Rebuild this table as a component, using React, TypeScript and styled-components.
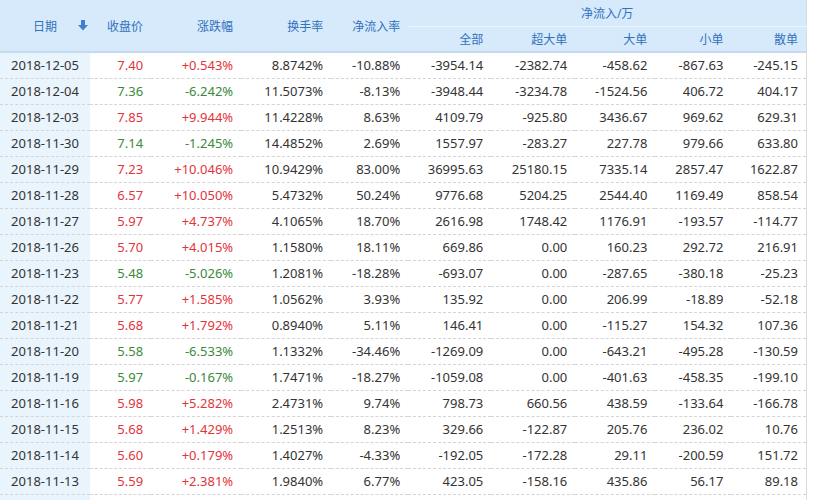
import React from "react";
import styled, { createGlobalStyle } from "styled-components";

const Global = createGlobalStyle`
  html, body { margin: 0; padding: 0; background: #ffffff; }
  body { font-family: "Noto Sans", "Noto Sans CJK SC", sans-serif; }
`;

type Row = [string, string, string, string, string, string, string, string, string, string];

const rows: Row[] = [
  ["2018-12-05", "7.40", "+0.543%", "8.8742%", "-10.88%", "-3954.14", "-2382.74", "-458.62", "-867.63", "-245.15"],
  ["2018-12-04", "7.36", "-6.242%", "11.5073%", "-8.13%", "-3948.44", "-3234.78", "-1524.56", "406.72", "404.17"],
  ["2018-12-03", "7.85", "+9.944%", "11.4228%", "8.63%", "4109.79", "-925.80", "3436.67", "969.62", "629.31"],
  ["2018-11-30", "7.14", "-1.245%", "14.4852%", "2.69%", "1557.97", "-283.27", "227.78", "979.66", "633.80"],
  ["2018-11-29", "7.23", "+10.046%", "10.9429%", "83.00%", "36995.63", "25180.15", "7335.14", "2857.47", "1622.87"],
  ["2018-11-28", "6.57", "+10.050%", "5.4732%", "50.24%", "9776.68", "5204.25", "2544.40", "1169.49", "858.54"],
  ["2018-11-27", "5.97", "+4.737%", "4.1065%", "18.70%", "2616.98", "1748.42", "1176.91", "-193.57", "-114.77"],
  ["2018-11-26", "5.70", "+4.015%", "1.1580%", "18.11%", "669.86", "0.00", "160.23", "292.72", "216.91"],
  ["2018-11-23", "5.48", "-5.026%", "1.2081%", "-18.28%", "-693.07", "0.00", "-287.65", "-380.18", "-25.23"],
  ["2018-11-22", "5.77", "+1.585%", "1.0562%", "3.93%", "135.92", "0.00", "206.99", "-18.89", "-52.18"],
  ["2018-11-21", "5.68", "+1.792%", "0.8940%", "5.11%", "146.41", "0.00", "-115.27", "154.32", "107.36"],
  ["2018-11-20", "5.58", "-6.533%", "1.1332%", "-34.46%", "-1269.09", "0.00", "-643.21", "-495.28", "-130.59"],
  ["2018-11-19", "5.97", "-0.167%", "1.7471%", "-18.27%", "-1059.08", "0.00", "-401.63", "-458.35", "-199.10"],
  ["2018-11-16", "5.98", "+5.282%", "2.4731%", "9.74%", "798.73", "660.56", "438.59", "-133.64", "-166.78"],
  ["2018-11-15", "5.68", "+1.429%", "1.2513%", "8.23%", "329.66", "-122.87", "205.76", "236.02", "10.76"],
  ["2018-11-14", "5.60", "+0.179%", "1.4027%", "-4.33%", "-192.05", "-172.28", "29.11", "-200.59", "151.72"],
  ["2018-11-13", "5.59", "+2.381%", "1.9840%", "6.77%", "423.05", "-158.16", "435.86", "56.17", "89.18"],
];

const colWidths = [90, 61, 90, 90, 77, 83, 84, 80, 76, 75];

const Table = styled.table`
  width: 807px;
  table-layout: fixed;
  border-collapse: collapse;
  border-right: 1px solid #dcdcdc;
  font-size: 13px;
  color: #333333;
`;

const Head = styled.thead`
  background: #d6eafb;
  border-bottom: 2px solid #c4daef;
`;

const HeadRow = styled.tr`
  height: 26px;
`;

const Th = styled.th<{ $align?: "center" | "right" }>`
  font-weight: normal;
  font-size: 12px;
  color: #3271bb;
  text-align: ${(p) => p.$align ?? "right"};
  padding: 0 8px 0 0;
  white-space: nowrap;
  vertical-align: middle;
`;

const DateTh = styled(Th)`
  position: relative;
  padding: 0;
`;

const GroupTh = styled(Th)`
  text-align: center;
  padding: 0;
  border-bottom: 1px solid #eaf4fd;
`;

const SortArrow = styled.svg`
  position: absolute;
  right: 2px;
  top: 20px;
  width: 10px;
  height: 11px;
`;

const Tr = styled.tr`
  height: 26px;
  border-bottom: 1px dashed #d4d4d4;
`;

const Td = styled.td<{ $tone?: "up" | "down" | "plain" }>`
  text-align: right;
  padding: 0 8px 0 0;
  white-space: nowrap;
  color: ${(p) => (p.$tone === "up" ? "#e2343b" : p.$tone === "down" ? "#3b8a3b" : "#333333")};
`;

const DateTd = styled.td`
  text-align: center;
  background: #eaf4fd;
  padding: 0;
  white-space: nowrap;
`;

const FillerRow = styled.tr`
  height: 20px;
`;

function tone(change: string): "up" | "down" {
  return change.startsWith("-") ? "down" : "up";
}

export default function App() {
  return (
    <>
      <Global />
      <Table>
        <colgroup>
          {colWidths.map((w, i) => (
            <col key={i} style={{ width: w }} />
          ))}
        </colgroup>
        <Head>
          <HeadRow>
            <DateTh rowSpan={2} $align="center">
              日期
              <SortArrow viewBox="0 0 10 11">
                <rect x="3" y="0" width="4" height="5" fill="#3f7fd0" />
                <polygon points="0,5 10,5 5,10.5" fill="#3f7fd0" />
              </SortArrow>
            </DateTh>
            <Th rowSpan={2}>收盘价</Th>
            <Th rowSpan={2}>涨跌幅</Th>
            <Th rowSpan={2}>换手率</Th>
            <Th rowSpan={2}>净流入率</Th>
            <GroupTh colSpan={5}>净流入/万</GroupTh>
          </HeadRow>
          <HeadRow>
            <Th>全部</Th>
            <Th>超大单</Th>
            <Th>大单</Th>
            <Th>小单</Th>
            <Th>散单</Th>
          </HeadRow>
        </Head>
        <tbody>
          {rows.map((r) => {
            const t = tone(r[2]);
            return (
              <Tr key={r[0]}>
                <DateTd>{r[0]}</DateTd>
                <Td $tone={t}>{r[1]}</Td>
                <Td $tone={t}>{r[2]}</Td>
                <Td>{r[3]}</Td>
                <Td>{r[4]}</Td>
                <Td>{r[5]}</Td>
                <Td>{r[6]}</Td>
                <Td>{r[7]}</Td>
                <Td>{r[8]}</Td>
                <Td>{r[9]}</Td>
              </Tr>
            );
          })}
          <FillerRow>
            <DateTd />
            <Td />
            <Td />
            <Td />
            <Td />
            <Td />
            <Td />
            <Td />
            <Td />
            <Td />
          </FillerRow>
        </tbody>
      </Table>
    </>
  );
}
